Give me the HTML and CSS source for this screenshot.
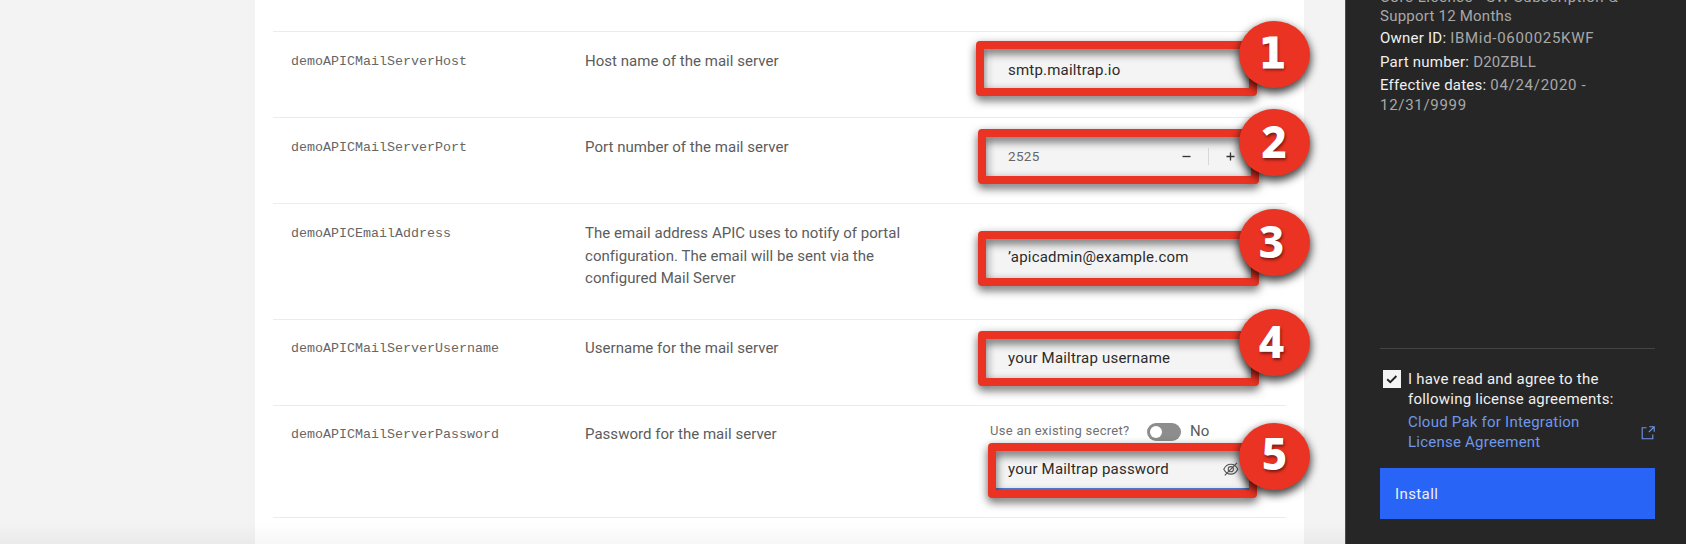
FILE: index.html
```html
<!DOCTYPE html>
<html lang="en">
<head>
<meta charset="utf-8">
<title>Install configuration</title>
<link rel="stylesheet" href="styles.css">
</head>
<body>
<div class="app">
  <main class="content">
    <section class="panel">
      <div class="row">
        <div class="name">demoAPICMailServerHost</div>
        <div class="desc">Host name of the mail server</div>
        <div class="control"><div class="field">smtp.mailtrap.io</div></div>
      </div>
      <div class="row">
        <div class="name">demoAPICMailServerPort</div>
        <div class="desc">Port number of the mail server</div>
        <div class="control">
          <div class="field number"><span>2525</span>
            <span class="steppers">
              <svg width="9" height="9" viewBox="0 0 9 9"><path d="M.5 4.5h8" stroke="#333" stroke-width="1.3"/></svg>
              <i class="sep"></i>
              <svg width="9" height="9" viewBox="0 0 9 9"><path d="M.5 4.5h8M4.5.5v8" stroke="#333" stroke-width="1.3"/></svg>
            </span>
          </div>
        </div>
      </div>
      <div class="row tall">
        <div class="name">demoAPICEmailAddress</div>
        <div class="desc">The email address APIC uses to notify of portal<br>configuration. The email will be sent via the<br>configured Mail Server</div>
        <div class="control"><div class="field">’apicadmin@example.com</div></div>
      </div>
      <div class="row user">
        <div class="name">demoAPICMailServerUsername</div>
        <div class="desc">Username for the mail server</div>
        <div class="control"><div class="field">your Mailtrap username</div></div>
      </div>
      <div class="row secret">
        <div class="name">demoAPICMailServerPassword</div>
        <div class="desc">Password for the mail server</div>
        <div class="control">
          <div class="toggle-line"><span class="toggle-label">Use an existing secret?</span><span class="toggle"></span><span class="toggle-state">No</span></div>
          <div class="field password"><span>your Mailtrap password</span>
            <svg class="eye" width="16" height="14" viewBox="0 0 16 14" fill="none" stroke="#555" stroke-width="1.1"><path d="M.8 7.200C2.400 4 5 2.300 7.800 2.300s5.400 1.700 7 4.900c-1.600 3.200-4.200 4.900-7 4.900S2.400 10.400.8 7.200z"/><circle cx="7.800" cy="7.200" r="2.600"/><path d="M1.800 13.400 14 .8"/></svg>
          </div>
        </div>
      </div>
      <div class="row last"></div>
    </section>
    <div class="fade"></div>
  </main>

  <aside class="sidebar">
    <div class="meta">
      <p class="license-name"><span>Core License - SW Subscription &amp;</span><span>Support 12 Months</span></p>
      <p>Owner ID: <span class="wide">IBMid-0600025KWF</span></p>
      <p>Part number: <span>D20ZBLL</span></p>
      <p>Effective dates: <span class="wide">04/24/2020 -<br>12/31/9999</span></p>
    </div>
    <div class="agreement">
      <div class="agree">
        <span class="checkbox"><svg width="18" height="18" viewBox="0 0 18 18"><path d="M4.200 9.200 7.300 12.200 13.400 6" fill="none" stroke="#222" stroke-width="1.900"/></svg></span>
        <div class="agree-text">I have read and agree to the<br>following license agreements:</div>
      </div>
      <div class="license">
        <a>Cloud Pak for Integration<br>License Agreement</a>
        <svg width="14" height="14" viewBox="0 0 14 14" fill="none" stroke="#6f97ea" stroke-width="1.100"><path d="M5.500 1.800H1.200v11h10.600V8.500M8.300.8h4.900v4.900M13 1 7.800 6.200"/></svg>
      </div>
      <div class="install">Install</div>
    </div>
  </aside>

  <div class="annotations">
    <div class="frame f1"></div><div class="badge b1">1</div>
    <div class="frame f2"></div><div class="badge b2">2</div>
    <div class="frame f3"></div><div class="badge b3">3</div>
    <div class="frame f4"></div><div class="badge b4">4</div>
    <div class="frame f5"></div><div class="badge b5">5</div>
  </div>
</div>
</body>
</html>
```
FILE: styles.css
```css
* { box-sizing: border-box; }
body { margin: 0; font: 15px/22.500px Roboto, "Liberation Sans", sans-serif; color: #5c5c5c; }
p { margin: 0; }
svg { display: block; flex: none; }
.app { position: relative; width: 1686px; height: 544px; display: flex; overflow: hidden; background: #f3f3f3; }

.content { position: relative; width: 1345px; padding: 0 41px 0 255px; }
.panel { height: 544px; padding: 31px 18px 0; background: #fff; }
.fade { position: absolute; left: 0; right: 0; bottom: 0; height: 22px; background: linear-gradient(rgba(0,0,0,0), rgba(0,0,0,.035)); }

.row { display: grid; grid-template-columns: 312px 405px 1fr; height: 86px; border-top: 1px solid #ececec; }
.row.tall { height: 116px; }
.row.secret { height: 112px; }
.row.last { height: 26px; }
.name { padding: 19px 0 0 18px; font: 13.330px/22px "Liberation Mono", monospace; color: #666; }
.desc { padding-top: 18px; letter-spacing: .03px; }
.user .name, .secret .name { padding-top: 18px; }
.user .desc, .secret .desc { padding-top: 17px; }
.control { padding: 17px 29px 0 0; }
.tall .control { padding-top: 32px; }
.secret .control { padding-top: 13px; }

.field { display: flex; align-items: center; justify-content: space-between; height: 43px; padding: 0 17px 0 18px; background: #f4f4f4; border-bottom: 1px solid #8d8d8d; color: #2b2b2b; letter-spacing: .2px; }
.number { padding-right: 22px; font-size: 13.500px; color: #666; letter-spacing: .35px; }
.steppers { display: flex; align-items: center; gap: 17px; }
.sep { width: 1px; height: 17px; background: #d8d8d8; }
.password { height: 42px; margin-top: 4px; padding: 2px 18px 0; border-bottom: 2px solid #4f80e0; }

.toggle-line { display: flex; align-items: center; height: 25px; }
.toggle-label { width: 157px; font-size: 13px; color: #707070; letter-spacing: .28px; }
.toggle { width: 34px; height: 18px; border-radius: 9px; background: #8d8d8d; display: flex; align-items: center; padding-left: 3px; }
.toggle::before { content: ""; width: 12px; height: 12px; border-radius: 50%; background: #fff; }
.toggle-state { margin-left: 9px; color: #5a5a5a; }

.sidebar { width: 341px; height: 544px; padding: 0 31px 25px 34px; border-left: 1px solid #4b4f52; background: #262626; color: #f0f0f0; line-height: 19.500px; letter-spacing: .23px; display: flex; flex-direction: column; justify-content: space-between; }
.meta { margin-top: -12px; display: flex; flex-direction: column; gap: 4px; }
.meta span { color: #a8a8a8; }
.meta .wide { letter-spacing: .7px; }
.license-name { display: flex; flex-direction: column; margin-bottom: -1px; }
.license-name span { white-space: nowrap; }
.license-name span:first-child { margin-bottom: -1px; letter-spacing: .55px; }
.agreement { border-top: 1px solid #444; padding-top: 21px; }
.agree { display: flex; gap: 7px; padding-left: 3px; }
.checkbox { width: 18px; height: 18px; background: #f4f4f4; }
.agree-text { white-space: nowrap; }
.license { display: flex; align-items: center; justify-content: space-between; margin: 4px 0 16px 28px; color: #6f97ea; }
.install { height: 51px; padding-left: 15px; line-height: 53px; background: #2864f5; letter-spacing: .4px; }

/* Numbered callouts over the form fields */
.annotations { position: absolute; inset: 0; }
.frame { position: absolute; left: 978px; width: 281px; height: 55px; border: 8px solid #eb3323; border-radius: 4px; filter: drop-shadow(0 4px 5px rgba(0,0,0,.65)); }
.f1 { left: 976px; top: 41px; }
.f2 { top: 129px; }
.f3 { top: 231px; }
.f4 { top: 331px; }
.f5 { left: 988px; top: 443px; width: 269px; }
.badge { position: absolute; left: 1239px; width: 71px; height: 67px; border-radius: 50%; background: #eb3323; box-shadow: 0 4px 8px 1px rgba(0,0,0,.75); color: #fff; font: 800 44px/64px "Noto Sans", sans-serif; text-align: center; padding-right: 6px; text-shadow: 1px 2px 3px rgba(0,0,0,.5); }
.b1 { top: 21px; padding-right: 4px; font: bold 43px/65px "DejaVu Sans Condensed", "DejaVu Sans", sans-serif; -webkit-text-stroke: 1px #fff; }
.b2 { top: 109px; padding-right: 1px; }
.b3 { top: 209px; }
.b4 { top: 309px; }
.b5 { top: 423px; padding-right: 0; line-height: 60px; }
```
